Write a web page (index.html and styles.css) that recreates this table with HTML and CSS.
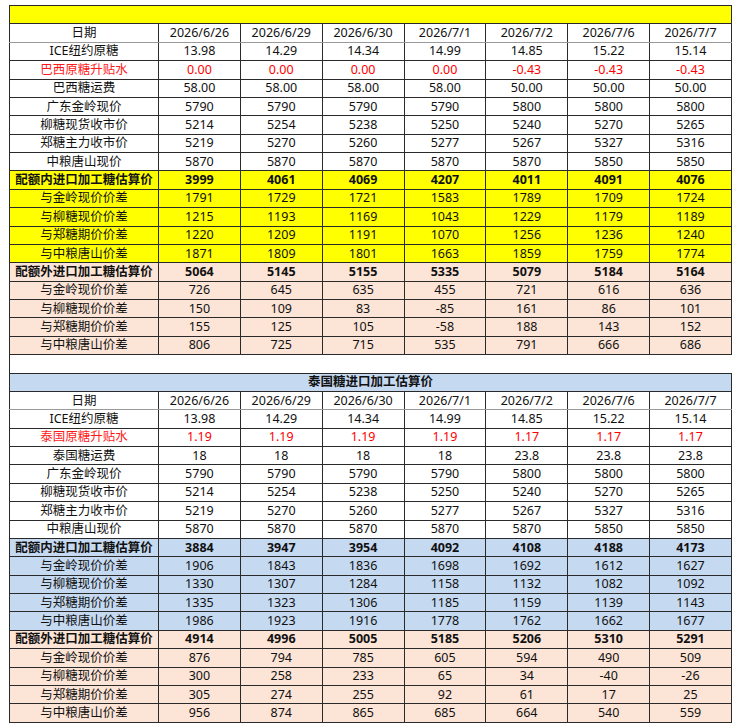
FILE: index.html
```html
<!DOCTYPE html>
<html lang="zh-CN">
<head>
<meta charset="utf-8">
<title>进口加工糖估算价</title>
<link rel="stylesheet" href="styles.css">
</head>
<body>
<table class="sheet">
<colgroup><col class="c-label"><col class="c-val"><col class="c-val"><col class="c-val"><col class="c-val"><col class="c-val"><col class="c-val"><col class="c-val"></colgroup>
<tbody>
<tr class="title yellow"><td colspan="8"></td></tr>
<tr class="head"><td>日期</td><td>2026/6/26</td><td>2026/6/29</td><td>2026/6/30</td><td>2026/7/1</td><td>2026/7/2</td><td>2026/7/6</td><td>2026/7/7</td></tr>
<tr><td>ICE纽约原糖</td><td>13.98</td><td>14.29</td><td>14.34</td><td>14.99</td><td>14.85</td><td>15.22</td><td>15.14</td></tr>
<tr class="red"><td>巴西原糖升贴水</td><td>0.00</td><td>0.00</td><td>0.00</td><td>0.00</td><td>-0.43</td><td>-0.43</td><td>-0.43</td></tr>
<tr><td>巴西糖运费</td><td>58.00</td><td>58.00</td><td>58.00</td><td>58.00</td><td>50.00</td><td>50.00</td><td>50.00</td></tr>
<tr><td>广东金岭现价</td><td>5790</td><td>5790</td><td>5790</td><td>5790</td><td>5800</td><td>5800</td><td>5800</td></tr>
<tr><td>柳糖现货收市价</td><td>5214</td><td>5254</td><td>5238</td><td>5250</td><td>5240</td><td>5270</td><td>5265</td></tr>
<tr><td>郑糖主力收市价</td><td>5219</td><td>5270</td><td>5260</td><td>5277</td><td>5267</td><td>5327</td><td>5316</td></tr>
<tr><td>中粮唐山现价</td><td>5870</td><td>5870</td><td>5870</td><td>5870</td><td>5870</td><td>5850</td><td>5850</td></tr>
<tr class="yellow bold"><td>配额内进口加工糖估算价</td><td>3999</td><td>4061</td><td>4069</td><td>4207</td><td>4011</td><td>4091</td><td>4076</td></tr>
<tr class="yellow"><td>与金岭现价价差</td><td>1791</td><td>1729</td><td>1721</td><td>1583</td><td>1789</td><td>1709</td><td>1724</td></tr>
<tr class="yellow"><td>与柳糖现价价差</td><td>1215</td><td>1193</td><td>1169</td><td>1043</td><td>1229</td><td>1179</td><td>1189</td></tr>
<tr class="yellow"><td>与郑糖期价价差</td><td>1220</td><td>1209</td><td>1191</td><td>1070</td><td>1256</td><td>1236</td><td>1240</td></tr>
<tr class="yellow"><td>与中粮唐山价差</td><td>1871</td><td>1809</td><td>1801</td><td>1663</td><td>1859</td><td>1759</td><td>1774</td></tr>
<tr class="peach bold"><td>配额外进口加工糖估算价</td><td>5064</td><td>5145</td><td>5155</td><td>5335</td><td>5079</td><td>5184</td><td>5164</td></tr>
<tr class="peach"><td>与金岭现价价差</td><td>726</td><td>645</td><td>635</td><td>455</td><td>721</td><td>616</td><td>636</td></tr>
<tr class="peach"><td>与柳糖现价价差</td><td>150</td><td>109</td><td>83</td><td>-85</td><td>161</td><td>86</td><td>101</td></tr>
<tr class="peach"><td>与郑糖期价价差</td><td>155</td><td>125</td><td>105</td><td>-58</td><td>188</td><td>143</td><td>152</td></tr>
<tr class="peach"><td>与中粮唐山价差</td><td>806</td><td>725</td><td>715</td><td>535</td><td>791</td><td>666</td><td>686</td></tr>
<tr class="gap"><td colspan="8"></td></tr>
<tr class="title blue bold"><td colspan="8">泰国糖进口加工估算价</td></tr>
<tr class="head"><td>日期</td><td>2026/6/26</td><td>2026/6/29</td><td>2026/6/30</td><td>2026/7/1</td><td>2026/7/2</td><td>2026/7/6</td><td>2026/7/7</td></tr>
<tr><td>ICE纽约原糖</td><td>13.98</td><td>14.29</td><td>14.34</td><td>14.99</td><td>14.85</td><td>15.22</td><td>15.14</td></tr>
<tr class="red"><td>泰国原糖升贴水</td><td>1.19</td><td>1.19</td><td>1.19</td><td>1.19</td><td>1.17</td><td>1.17</td><td>1.17</td></tr>
<tr><td>泰国糖运费</td><td>18</td><td>18</td><td>18</td><td>18</td><td>23.8</td><td>23.8</td><td>23.8</td></tr>
<tr><td>广东金岭现价</td><td>5790</td><td>5790</td><td>5790</td><td>5790</td><td>5800</td><td>5800</td><td>5800</td></tr>
<tr><td>柳糖现货收市价</td><td>5214</td><td>5254</td><td>5238</td><td>5250</td><td>5240</td><td>5270</td><td>5265</td></tr>
<tr><td>郑糖主力收市价</td><td>5219</td><td>5270</td><td>5260</td><td>5277</td><td>5267</td><td>5327</td><td>5316</td></tr>
<tr><td>中粮唐山现价</td><td>5870</td><td>5870</td><td>5870</td><td>5870</td><td>5870</td><td>5850</td><td>5850</td></tr>
<tr class="blue bold"><td>配额内进口加工糖估算价</td><td>3884</td><td>3947</td><td>3954</td><td>4092</td><td>4108</td><td>4188</td><td>4173</td></tr>
<tr class="blue"><td>与金岭现价价差</td><td>1906</td><td>1843</td><td>1836</td><td>1698</td><td>1692</td><td>1612</td><td>1627</td></tr>
<tr class="blue"><td>与柳糖现价价差</td><td>1330</td><td>1307</td><td>1284</td><td>1158</td><td>1132</td><td>1082</td><td>1092</td></tr>
<tr class="blue"><td>与郑糖期价价差</td><td>1335</td><td>1323</td><td>1306</td><td>1185</td><td>1159</td><td>1139</td><td>1143</td></tr>
<tr class="blue"><td>与中粮唐山价差</td><td>1986</td><td>1923</td><td>1916</td><td>1778</td><td>1762</td><td>1662</td><td>1677</td></tr>
<tr class="peach bold"><td>配额外进口加工糖估算价</td><td>4914</td><td>4996</td><td>5005</td><td>5185</td><td>5206</td><td>5310</td><td>5291</td></tr>
<tr class="peach"><td>与金岭现价价差</td><td>876</td><td>794</td><td>785</td><td>605</td><td>594</td><td>490</td><td>509</td></tr>
<tr class="peach"><td>与柳糖现价价差</td><td>300</td><td>258</td><td>233</td><td>65</td><td>34</td><td>-40</td><td>-26</td></tr>
<tr class="peach"><td>与郑糖期价价差</td><td>305</td><td>274</td><td>255</td><td>92</td><td>61</td><td>17</td><td>25</td></tr>
<tr class="peach"><td>与中粮唐山价差</td><td>956</td><td>874</td><td>865</td><td>685</td><td>664</td><td>540</td><td>559</td></tr>
</tbody>
</table>
</body>
</html>
```
FILE: styles.css
```css
html, body {
  background: #ffffff;
}
body {
  margin: 0;
  padding: 5px 0 0 9px;
  font-family: "Noto Sans", "Noto Sans CJK SC", sans-serif;
  font-size: 12.5px;
  color: #111111;
}
.sheet {
  border-collapse: collapse;
  table-layout: fixed;
  width: 722px;
}
.c-label { width: 149px; }
.c-val { width: 81.85px; }
.sheet td {
  border: 1px solid #2a2a2a;
  height: 17.38px;
  padding: 0;
  line-height: 16px;
  text-align: center;
  white-space: nowrap;
  overflow: hidden;
}
.sheet tr.head td {
  border-bottom-color: #9a9a9a;
}
.sheet td:nth-child(8) {
  border-left-color: #8c8c8c;
}
.sheet tr.title td,
.sheet tr.gap td {
  border-left-color: #2a2a2a;
}
.yellow td { background: #ffff00; }
.peach td { background: #fce4d6; }
.blue td { background: #c5d9f1; }
.red td { color: #ff0000; }
.red td:first-child { color: #ff1a1a; }
.bold td { font-weight: 700; }
.gap td { background: #ffffff; border-right-color: #ffffff; }
```
